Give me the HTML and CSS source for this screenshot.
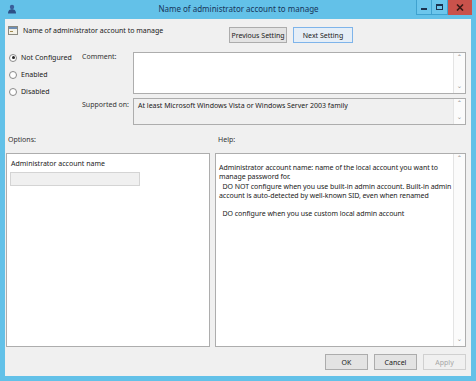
FILE: index.html
```html
<!DOCTYPE html>
<html lang="en">
<head>
    <meta charset="UTF-8">
    <title>Name of administrator account to manage</title>
    <link rel="stylesheet" href="styles.css">
</head>
<body>
    <div class="window">
        <div class="titlebar">
            <svg class="app-icon" width="10" height="10" viewBox="0 0 10 10">
                <circle cx="5" cy="3" r="2.2" fill="#3a5f9a"/>
                <path d="M1 9.5 C1 6 3 5.2 5 5.2 C7 5.2 9 6 9 9.5 Z" fill="#2d4f86"/>
            </svg>
            <div class="title">Name of administrator account to manage</div>
            <div class="controls">
                <div class="ctl ctl-min"><span class="min-bar"></span></div>
                <div class="ctl ctl-max"><span class="max-box"></span></div>
                <div class="ctl ctl-close">
                    <svg width="8" height="7" viewBox="0 0 8 7"><path d="M1 0.5 L7 6.5 M7 0.5 L1 6.5" stroke="#3b1a16" stroke-width="1.6"/></svg>
                </div>
            </div>
        </div>

        <div class="body">
            <div class="top-row">
                <div class="policy-name">
                    <svg width="10" height="9" viewBox="0 0 10 9">
                        <rect x="0.5" y="0.5" width="9" height="8" fill="#f4f1e6" stroke="#8a8a80"/>
                        <rect x="1" y="1" width="8" height="2" fill="#6f8fb5"/>
                        <rect x="2" y="5" width="3" height="1" fill="#a08a50"/>
                    </svg>
                    <span>Name of administrator account to manage</span>
                </div>
                <div class="nav-buttons">
                    <button class="btn btn-prev">Previous Setting</button>
                    <button class="btn btn-next">Next Setting</button>
                </div>
            </div>

            <div class="settings">
                <div class="radios">
                    <label class="radio"><span class="dot checked"></span>Not Configured</label>
                    <label class="radio"><span class="dot"></span>Enabled</label>
                    <label class="radio"><span class="dot"></span>Disabled</label>
                </div>
                <div class="fields">
                    <div class="field-label">Comment:</div>
                    <div class="box box-comment">
                        <div class="box-text"></div>
                        <div class="scroll"><span class="arr">&#710;</span><span class="arr">&#711;</span></div>
                    </div>
                    <div class="field-label label-supported">Supported on:</div>
                    <div class="box box-supported">
                        <div class="box-text">At least Microsoft Windows Vista or Windows Server 2003 family</div>
                        <div class="scroll"><span class="arr">&#710;</span><span class="arr">&#711;</span></div>
                    </div>
                </div>
            </div>

            <div class="section-labels">
                <div class="options-label">Options:</div>
                <div class="help-label">Help:</div>
            </div>

            <div class="panes">
                <div class="pane pane-options">
                    <div class="opt-label">Administrator account name</div>
                    <div class="opt-input"></div>
                </div>
                <div class="pane pane-help">
                    <div class="help-text">
                        <p>Administrator account name: name of the local account you want to manage password for.<br>&nbsp;&nbsp;DO NOT configure when you use built-in admin account. Built-in admin account is auto-detected by well-known SID, even when renamed</p>
                        <p>&nbsp;&nbsp;DO configure when you use custom local admin account</p>
                    </div>
                    <div class="scroll"><span class="arr">&#710;</span><span class="arr">&#711;</span></div>
                </div>
            </div>

            <div class="footer">
                <button class="btn btn-foot">OK</button>
                <button class="btn btn-foot">Cancel</button>
                <button class="btn btn-foot disabled">Apply</button>
            </div>
        </div>
    </div>
</body>
</html>
```

FILE: styles.css
```css
body {
    margin: 0;
    font-family: "Noto Sans", "Open Sans", sans-serif;
    font-size: 7px;
    color: #1a1a1a;
}

.window {
    width: 476px;
    height: 381px;
    box-sizing: border-box;
    background-color: #63c1e8;
    padding: 0 5px 5px 5px;
    display: flex;
    flex-direction: column;
}

.titlebar {
    height: 19px;
    display: flex;
    align-items: flex-start;
    flex-shrink: 0;
}

.app-icon {
    margin: 4px 0 0 2px;
}

.title {
    flex: 1;
    text-align: center;
    font-size: 8px;
    line-height: 18px;
    color: #17355a;
    padding-left: 44px;
}

.controls {
    display: flex;
    margin-right: -1px;
}

.ctl {
    height: 15px;
    display: flex;
    align-items: center;
    justify-content: center;
    box-sizing: border-box;
}

.ctl-min,
.ctl-max {
    width: 16px;
    border: 1px solid #3fa2cf;
    border-top: none;
    background-color: #6cc6ec;
}

.ctl-max {
    border-left: none;
}

.min-bar {
    width: 6px;
    height: 2px;
    margin-top: 4px;
    background-color: #1c3350;
}

.max-box {
    width: 5px;
    height: 3px;
    border: 1.5px solid #1c3350;
    border-top-width: 2px;
}

.ctl-close {
    width: 24px;
    background-color: #c9524b;
}

.body {
    flex: 1;
    background-color: #f0f0f0;
    padding: 0 5px 0 1px;
    display: flex;
    flex-direction: column;
}

.top-row {
    display: flex;
    height: 30px;
    flex-shrink: 0;
}

.policy-name {
    display: flex;
    align-items: flex-start;
    gap: 5px;
    padding: 7px 0 0 2px;
    width: 220px;
}

.policy-name span {
    margin-top: 0;
}

.nav-buttons {
    display: flex;
    gap: 6px;
    padding-top: 8px;
}

.btn {
    font-family: inherit;
    font-size: 7px;
    color: #1a1a1a;
    background-color: #e3e3e3;
    border: 1px solid #acacac;
    height: 16px;
    padding: 0;
    box-sizing: border-box;
    white-space: nowrap;
}

.btn-prev {
    width: 58px;
    margin-left: 1px;
}

.btn-next {
    width: 60px;
    border-color: #7eb4ea;
    background-color: #e5eef7;
}

.settings {
    display: flex;
    height: 80px;
    box-sizing: border-box;
    padding-top: 3px;
    flex-shrink: 0;
}

.radios {
    width: 73px;
    display: flex;
    flex-direction: column;
    gap: 6px;
    padding-left: 3px;
}

.radio {
    display: flex;
    align-items: center;
    gap: 4px;
    height: 11px;
}

.dot {
    width: 6px;
    height: 6px;
    border: 1px solid #8a8a8a;
    border-radius: 50%;
    background-color: #fff;
    position: relative;
}

.dot.checked::after {
    content: "";
    position: absolute;
    left: 1.5px;
    top: 1.5px;
    width: 3px;
    height: 3px;
    border-radius: 50%;
    background-color: #222;
}

.fields {
    flex: 1;
    display: grid;
    grid-template-columns: 51px 1fr;
    grid-template-rows: 42px 27px;
    row-gap: 4px;
}

.field-label {
    color: #333;
    line-height: 9px;
}

.label-supported {
    padding-top: 2px;
}

.box {
    display: flex;
    border: 1px solid #adadad;
    background-color: #fff;
}

.box-supported {
    background-color: #f0f0f0;
}

.box-text {
    flex: 1;
    padding: 2px 4px;
}

.scroll {
    width: 11px;
    border-left: 1px solid #e4e4e4;
    display: flex;
    flex-direction: column;
    justify-content: space-between;
    align-items: center;
    color: #9a9a9a;
    font-size: 8px;
    line-height: 9px;
    background-color: #fbfbfb;
}

.arr {
    height: 7px;
    padding-top: 1px;
}

.section-labels {
    display: flex;
    height: 24px;
    padding-top: 6px;
    box-sizing: border-box;
    color: #333;
    flex-shrink: 0;
}

.options-label {
    width: 210px;
    padding-left: 2px;
}

.panes {
    display: flex;
    gap: 5px;
    height: 194px;
    flex-shrink: 0;
}

.pane {
    background-color: #fff;
    border: 1px solid #adadad;
    box-sizing: border-box;
}

.pane-options {
    width: 204px;
    padding: 5px 3px;
}

.opt-label {
    padding-left: 1px;
}

.opt-input {
    width: 130px;
    height: 14px;
    margin-top: 4px;
    background-color: #f0f0f0;
    border: 1px solid #d4d4d4;
    box-sizing: border-box;
}

.pane-help {
    flex: 1;
    display: flex;
}

.help-text {
    flex: 1;
    padding: 9px 0 0 3px;
    line-height: 9.3px;
    letter-spacing: -0.06px;
}

.help-text p {
    margin: 0 0 9px 0;
}

.footer {
    display: flex;
    justify-content: flex-end;
    gap: 6px;
    padding-top: 7px;
}

.btn-foot {
    width: 43px;
}

.btn-foot.disabled {
    color: #a6a6a6;
    border-color: #d0d0d0;
    background-color: #f0f0f0;
}
```
